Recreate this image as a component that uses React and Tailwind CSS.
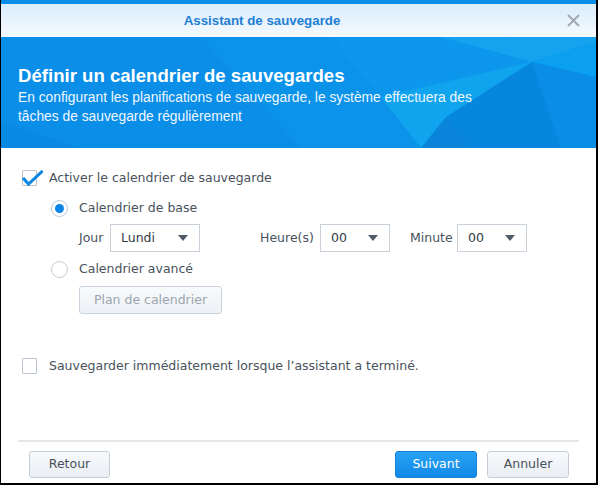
import { useState } from 'react';

const body = { fontFamily: '"DejaVu Sans", Verdana, sans-serif' };
const arial = { fontFamily: '"Liberation Sans", Arial, sans-serif' };

const Checkbox = ({ checked, onChange }) => (
  <button
    type="button"
    onClick={onChange}
    className="relative w-[15px] h-[16px] border border-[#bcc6d0] bg-white rounded-[1px] shrink-0"
  >
    {checked && (
      <svg className="absolute -top-[1px] -left-[1px]" width="24" height="18" viewBox="0 0 24 18">
        <path d="M2 9 L6.5 14 L19.5 2" fill="none" stroke="#0b86e3" strokeWidth="3" strokeLinecap="square" />
      </svg>
    )}
  </button>
);

const Radio = ({ checked, onChange }) => (
  <button
    type="button"
    onClick={onChange}
    className={`w-[17px] h-[17px] rounded-full border bg-white flex items-center justify-center shrink-0 ${
      checked ? 'border-[#b7c9dc]' : 'border-[#c4ccd4]'
    }`}
  >
    {checked && <span className="w-[9px] h-[9px] rounded-full bg-[#0a86ea]" />}
  </button>
);

const Select = ({ value, width }) => (
  <div
    className={`h-[28px] border border-[#c8d0d9] bg-white flex items-center justify-between pl-[10px] pr-[11px] text-[#333c45] ${width}`}
  >
    <span>{value}</span>
    <svg width="10" height="6" viewBox="0 0 10 6">
      <path d="M0 0 H10 L5 6 Z" fill="#525c66" />
    </svg>
  </div>
);

const Banner = () => (
  <svg className="absolute inset-0" width="595" height="111" viewBox="0 0 595 111" preserveAspectRatio="none">
    <rect width="595" height="111" fill="#0a8ee8" />
    <polygon points="200,0 330,0 420,111 300,111" fill="#0b93ea" />
    <polygon points="330,0 440,0 531,25 420,111" fill="#0d97ec" />
    <polygon points="440,0 595,0 595,5 531,25" fill="#15a3ef" />
    <polygon points="595,5 595,40 531,25" fill="#0aa0ef" />
    <polygon points="531,25 470,90 420,111 380,60" fill="#10a4ee" />
    <polygon points="531,25 560,111 470,111 445,80" fill="#0686dc" />
    <polygon points="531,25 595,40 595,111 560,111" fill="#0a8ee5" />
    <polygon points="0,85 80,111 0,111" fill="#0a89e2" />
    <polygon points="420,111 470,111 445,80" fill="#0a84da" />
  </svg>
);

export default function App() {
  const [enabled, setEnabled] = useState(true);
  const [mode, setMode] = useState('base');
  const [now, setNow] = useState(false);

  return (
    <div
      className="w-[598px] h-[485px] bg-white border-l border-r-2 border-b-2 border-black flex flex-col text-[12.5px] text-[#48525c]"
      style={body}
    >
      {/* Title bar */}
      <div className="h-[4px] bg-[#0a8ce9]" />
      <div className="h-[33px] bg-gradient-to-b from-[#dbecfc] to-[#f5faff] flex items-center justify-center pr-[73px] relative">
        <span className="text-[13.3px] font-bold text-[#1f7fd4]" style={arial}>
          Assistant de sauvegarde
        </span>
        <svg className="absolute right-[16px] top-[10px]" width="13" height="13" viewBox="0 0 13 13">
          <path d="M1 1 L12 12 M12 1 L1 12" stroke="#a2aab2" strokeWidth="2" />
        </svg>
      </div>

      {/* Banner */}
      <div className="relative h-[111px] overflow-hidden text-white" style={arial}>
        <Banner />
        <div className="relative pl-[17px] pt-[27px]">
          <div className="text-[18.6px] font-bold leading-[24px]">
            Définir un calendrier de sauvegardes
          </div>
          <div className="text-[13.8px] leading-[19px] text-[#eef7ff]">
            En configurant les planifications de sauvegarde, le système effectuera des
            <br />
            tâches de sauvegarde régulièrement
          </div>
        </div>
      </div>

      {/* Body */}
      <div className="flex flex-col pl-[21px]">
        <div className="mt-[18px] h-[24px] flex items-center gap-[12px]">
          <Checkbox checked={enabled} onChange={() => setEnabled(!enabled)} />
          <span>Activer le calendrier de sauvegarde</span>
        </div>

        <div className="pl-[29px] flex flex-col">
          <div className="mt-[6px] h-[24px] flex items-center gap-[11px]">
            <Radio checked={mode === 'base'} onChange={() => setMode('base')} />
            <span>Calendrier de base</span>
          </div>

          <div className="mt-[4px] pl-[28px] flex items-center">
            <span className="w-[31px]">Jour</span>
            <Select value="Lundi" width="w-[90px]" />
            <span className="ml-[60px] w-[60px]">Heure(s)</span>
            <Select value="00" width="w-[70px]" />
            <span className="ml-[20px] w-[47px]">Minute</span>
            <Select value="00" width="w-[70px]" />
          </div>

          <div className="mt-[5px] h-[24px] flex items-center gap-[11px]">
            <Radio checked={mode === 'adv'} onChange={() => setMode('adv')} />
            <span>Calendrier avancé</span>
          </div>

          <div className="mt-[5px] pl-[28px]">
            <button
              type="button"
              disabled
              className="h-[28px] w-[143px] border border-[#c9d2db] rounded-[3px] bg-gradient-to-b from-[#f8fafc] to-[#edf2f6] text-[#9ba5af]"
            >
              Plan de calendrier
            </button>
          </div>
        </div>

        <div className="mt-[40px] h-[24px] flex items-center gap-[12px]">
          <Checkbox checked={now} onChange={() => setNow(!now)} />
          <span>Sauvegarder immédiatement lorsque l’assistant a terminé.</span>
        </div>
      </div>

      {/* Footer */}
      <div className="mt-auto">
        <div className="mx-[17px] h-[2px] bg-[#e6e6e6]" />
        <div className="flex items-center pl-[28px] pr-[27px] mt-[9px] mb-[5px]">
          <button
            type="button"
            className="h-[27px] w-[81px] border border-[#c5ced8] rounded-[3px] bg-gradient-to-b from-[#f8fafc] to-[#e9eef4] text-[#46505a]"
          >
            Retour
          </button>
          <div className="ml-auto flex gap-[10px]">
            <button
              type="button"
              className="h-[27px] w-[82px] border border-[#1580d8] rounded-[3px] bg-gradient-to-b from-[#28a3f4] to-[#1189e8] text-white"
            >
              Suivant
            </button>
            <button
              type="button"
              className="h-[27px] w-[82px] border border-[#c5ced8] rounded-[3px] bg-gradient-to-b from-[#f8fafc] to-[#e9eef4] text-[#46505a]"
            >
              Annuler
            </button>
          </div>
        </div>
      </div>
    </div>
  );
}
